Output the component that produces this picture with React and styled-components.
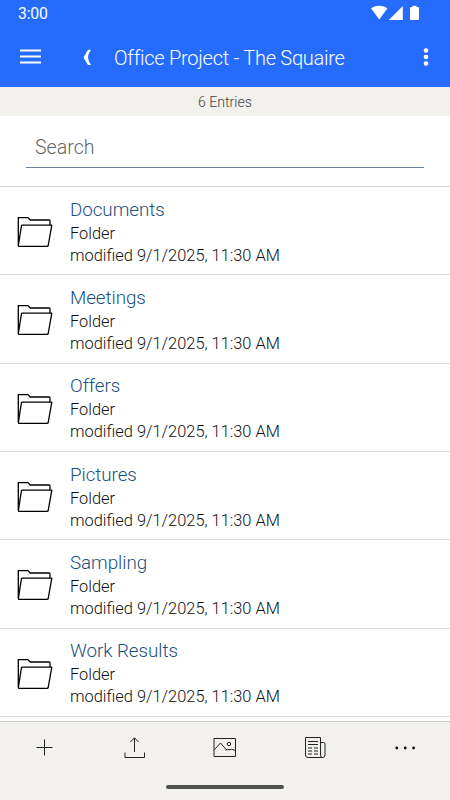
import React from 'react';
import styled, { createGlobalStyle } from "styled-components";

const GlobalStyle = createGlobalStyle`
  * {
    box-sizing: border-box;
  }
  body {
    margin: 0;
    background-color: white;
    font-family: Roboto, "Noto Sans", sans-serif;
    font-weight: 300;
  }
`;

const Container = styled.div`
  width: 100%;
  height: 800px;
  display: flex;
  flex-direction: column;
  overflow: hidden;
`;

const Header = styled.header`
  height: 87px;
  flex-shrink: 0;
  background-color: #246bfe;
  color: white;
`;

const StatusBar = styled.div`
  height: 27px;
  display: flex;
  justify-content: space-between;
  padding: 0 30px 0 18px;
`;

const Clock = styled.span`
  font-size: 15.8px;
  font-weight: 400;
  line-height: 27px;
  letter-spacing: -0.2px;
`;

const StatusIcons = styled.svg`
  width: 50px;
  height: 27px;
`;

const NavBar = styled.div`
  height: 60px;
  display: flex;
  align-items: center;
  padding: 0 20px;
`;

const IconButton = styled.button`
  display: flex;
  padding: 0;
  border: none;
  background: none;
  color: inherit;
  cursor: pointer;
  margin-left: ${props => props.$left || 0}px;
`;

const Title = styled.h1`
  flex: 1;
  margin: 2px 0 0 22px;
  font-size: 20px;
  font-weight: 300;
  line-height: 24px;
  white-space: nowrap;
  letter-spacing: -0.26px;
`;

const Entries = styled.div`
  height: 29px;
  flex-shrink: 0;
  background-color: #f2f1ed;
  color: #444;
  font-size: 14.1px;
  line-height: 30px;
  text-align: center;
`;

const SearchBox = styled.div`
  height: 71px;
  flex-shrink: 0;
  padding: 15px 26px 0;
  border-bottom: 1px solid #d6d6d6;
`;

const SearchInput = styled.input`
  display: block;
  width: 398px;
  height: 37px;
  padding: 0 9px 4px;
  border: none;
  border-bottom: 1px solid #68809a;
  outline: none;
  background: none;
  font-family: inherit;
  font-size: 19.6px;
  font-weight: 300;
  &::placeholder {
    color: #666;
    opacity: 1;
  }
`;

const List = styled.div`
  flex: 1;
  overflow: hidden;
`;

const Row = styled.div`
  height: 88.33px;
  display: flex;
  border-bottom: 1px solid #d9d9d9;
`;

const FolderIcon = styled.svg`
  width: 38px;
  height: 36px;
  margin: 27px 16px 0;
  flex-shrink: 0;
`;

const Info = styled.div`
  padding-top: 11.7px;
`;

const Name = styled.div`
  color: #1a5080;
  font-size: 18.8px;
  line-height: 23px;
  letter-spacing: -0.05px;
`;

const Detail = styled.div`
  color: #111;
  font-size: 16.4px;
  line-height: 22px;
  &:nth-child(2) {
    margin-top: 1px;
  }
`;

const Toolbar = styled.nav`
  height: 79px;
  flex-shrink: 0;
  display: grid;
  grid-template-columns: repeat(5, 90px);
  grid-template-rows: 51px 1fr;
  justify-items: center;
  align-items: center;
  background-color: #f2f1ed;
  border-top: 1px solid #cccccc;
`;

const ToolIcon = styled.svg`
  width: 26px;
  height: 26px;
  fill: none;
  stroke: #222;
  stroke-width: 1;
`;

const HomeIndicator = styled.div`
  grid-column: 1 / -1;
  align-self: start;
  width: 118px;
  height: 4px;
  margin-top: 12px;
  border-radius: 2px;
  background-color: #505050;
`;

const folders = ["Documents", "Meetings", "Offers", "Pictures", "Sampling", "Work Results"];

const Folder = () => (
    <FolderIcon viewBox="0 0 38 36" fill="none" stroke="black" strokeWidth="1.3" strokeLinejoin="round">
        <path d="M2.3 31V3.6H12L14.2 6H33.2Q34 6 34 7V11" />
        <path d="M6.3 11.2H35.8L32.2 31.5Q32 32.4 31 32.4H3.3Q2.2 32.4 2.4 31.2L5.4 12Q5.5 11.2 6.3 11.2Z" />
    </FolderIcon>
);

const App = () => {
    return (
        <Container>
            <GlobalStyle />
            <Header>
                <StatusBar>
                    <Clock>3:00</Clock>
                    <StatusIcons viewBox="0 0 50 27" fill="white">
                        <path d="M1 8.2Q9.2 3.5 17.5 8.2L9.3 19.5Z" />
                        <path d="M32.8 6V20H18.8Z" />
                        <path d="M42.5 5.7H46.5V7H48Q49 7 49 8V19Q49 20 48 20H41Q40 20 40 19V8Q40 7 41 7H42.5Z" />
                    </StatusIcons>
                </StatusBar>
                <NavBar>
                    <IconButton>
                        <svg width="21" height="16" fill="white">
                            <path d="M0 .5H21V2.5H0ZM0 6.5H21V8.5H0ZM0 12.5H21V14.5H0Z" />
                        </svg>
                    </IconButton>
                    <IconButton $left={42}>
                        <svg width="9" height="17" fill="white">
                            <path d="M5 .8H8Q5 4.8 5 8.3Q5 12 8 16H5L.5 8.4Z" />
                        </svg>
                    </IconButton>
                    <Title>Office Project - The Squaire</Title>
                    <IconButton>
                        <svg width="8" height="20" fill="white">
                            <circle cx="4" cy="3.5" r="2.3" />
                            <circle cx="4" cy="10" r="2.3" />
                            <circle cx="4" cy="16.5" r="2.3" />
                        </svg>
                    </IconButton>
                </NavBar>
            </Header>
            <Entries>6 Entries</Entries>
            <SearchBox>
                <SearchInput placeholder="Search" />
            </SearchBox>
            <List>
                {folders.map((name) => (
                    <Row key={name}>
                        <Folder />
                        <Info>
                            <Name>{name}</Name>
                            <Detail>Folder</Detail>
                            <Detail>modified 9/1/2025, 11:30 AM</Detail>
                        </Info>
                    </Row>
                ))}
            </List>
            <Toolbar>
                <ToolIcon viewBox="0 0 26 26">
                    <path d="M12.5 4.5V20.5M4.5 12.5H20.5" />
                </ToolIcon>
                <ToolIcon viewBox="0 0 26 26">
                    <path d="M12.5 17V3M8.5 7L12.5 2.8L16.5 7M3 17.5V22.5H22.5V17.5" />
                </ToolIcon>
                <ToolIcon viewBox="0 0 26 26">
                    <path d="M2 3.5H23.5V21.5H2Z" />
                    <path d="M2 15L8.5 8L15 15.5M13.5 15Q15.5 13.5 17 14.8Q19 13.5 23.5 15.5" />
                    <circle cx="17" cy="9" r="1.7" />
                </ToolIcon>
                <ToolIcon viewBox="0 0 26 26">
                    <path d="M18.5 20V2.5H3.5V20Q3.5 22.5 6 22.5H20.5Q23 22.5 23 20V9Q23 7.5 21.5 7.5H18.5M18.5 20Q18.5 22.5 20.5 22.5" />
                    <path d="M6 6.5H16M6 9.5H16M6 13H10M12 13H16M6 16H10M12 16H16M6 19H10M12 19H16" />
                </ToolIcon>
                <ToolIcon viewBox="0 0 26 26">
                    <g fill="#111" stroke="none">
                        <circle cx="4.8" cy="13" r="1.4" />
                        <circle cx="13.2" cy="13" r="1.4" />
                        <circle cx="21.6" cy="13" r="1.4" />
                    </g>
                </ToolIcon>
                <HomeIndicator />
            </Toolbar>
        </Container>
    );
};

export default App;
